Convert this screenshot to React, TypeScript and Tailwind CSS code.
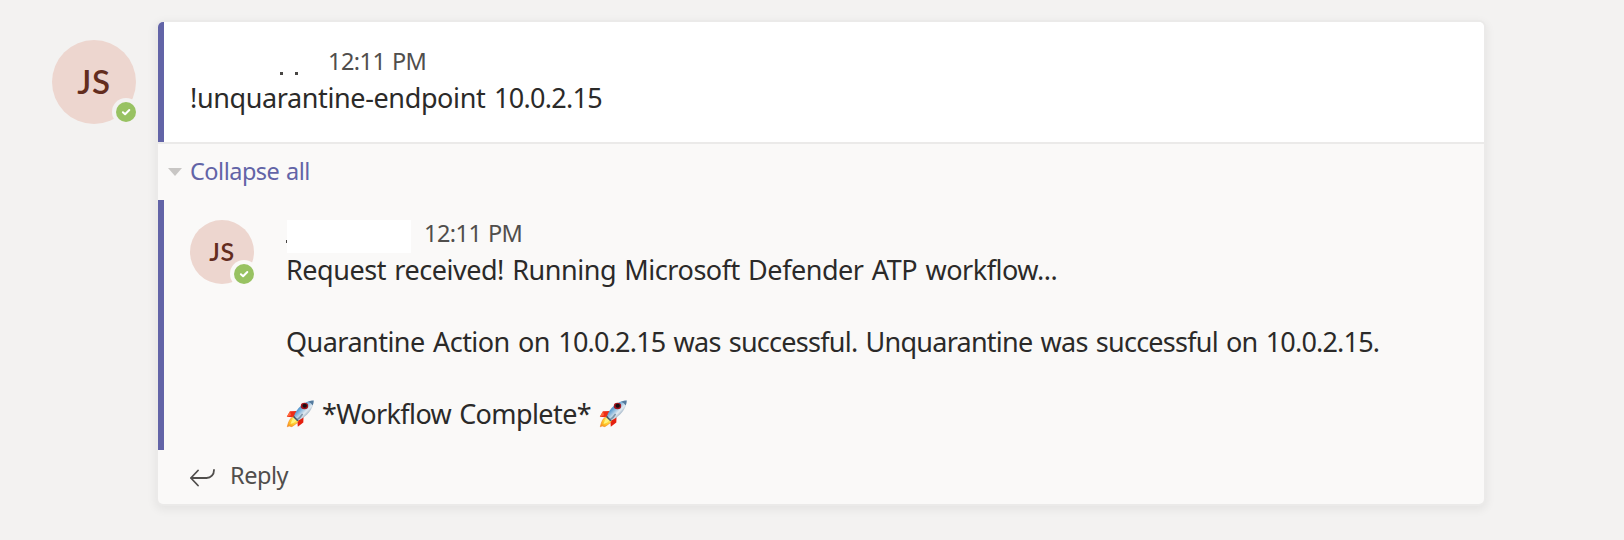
function Check() {
  return (
    <svg viewBox="0 0 20 20" className="h-5 w-5" fill="none">
      <circle cx="10" cy="10" r="10" fill="#98c262" />
      <path d="M6.9 10.2 9.1 12.3 13.3 8" stroke="#fff" strokeWidth="2" strokeLinecap="round" strokeLinejoin="round" />
    </svg>
  );
}

function Avatar({ large = false }: { large?: boolean }) {
  return (
    <div
      className={
        large
          ? "relative flex h-[84px] w-[84px] shrink-0 items-center justify-center rounded-full bg-[#edd6cf] pb-[2px] font-['Lato',sans-serif] text-[33px] leading-10 font-semibold tracking-[0.8px] text-[#632d1e]"
          : "relative flex h-16 w-16 shrink-0 items-center justify-center rounded-full bg-[#edd6cf] pb-[2px] font-['Lato',sans-serif] text-[25px] leading-8 font-semibold tracking-[0.5px] text-[#632d1e]"
      }
    >
      <span>JS</span>
      <span
        className={
          large
            ? "absolute -right-1 -bottom-[2px] rounded-full bg-[#f3f2f1] p-1"
            : "absolute -right-1 -bottom-1 rounded-full bg-[#faf9f8] p-1"
        }
      >
        <Check />
      </span>
    </div>
  );
}

function Rocket() {
  return (
    <svg viewBox="0 0 28 28" className="h-7 w-7 shrink-0">
      <defs>
        <linearGradient id="hull" x1="0" y1="0" x2="1" y2="1">
          <stop offset="0" stopColor="#245d94" />
          <stop offset="0.35" stopColor="#5f9fd2" />
          <stop offset="0.58" stopColor="#e3ebf1" />
          <stop offset="0.8" stopColor="#5d7c99" />
          <stop offset="1" stopColor="#3c5975" />
        </linearGradient>
        <linearGradient id="fire" x1="1" y1="0" x2="0" y2="1">
          <stop offset="0" stopColor="#fff27a" />
          <stop offset="0.6" stopColor="#ffc928" />
          <stop offset="1" stopColor="#f58a1f" />
        </linearGradient>
      </defs>
      <path d="M11 11 4 11.3.8 16.7 8.5 17.5Z" fill="#ee2d16" />
      <path d="M4 11.3.8 16.7 5 15.3Z" fill="#ff6a3b" />
      <path d="M17.5 17 17.3 22.5 11.8 26.8 11.3 20Z" fill="#e4200f" />
      <path d="M7.5 16.7C4 18 2.5 21.5 1.3 26.8 3 26 4 25.7 5 26.8 7 26.2 8 25.2 9 24.4 11 23.5 12.3 22 12.3 20Z" fill="url(#fire)" stroke="#f4831f" strokeWidth=".6" />
      <path d="M8 17.5C6 19 5.5 22 4.5 24 7.5 23 9.7 22.2 10.5 19.8Z" fill="#fff37e" />
      <path d="M8 16C10.5 8.5 17.5 1 27.7.5 27.8 8.5 20.5 17 12.2 20.5Z" fill="url(#hull)" />
      <path d="M22 1.8Q25 .5 27.7.5 27.7 3 26.7 5.6 25.3 2.8 22 1.8Z" fill="#557b9e" />
      <path d="M7.8 15.8 12.6 20.6 11.3 21.2 7.2 17.2Z" fill="#38506c" />
      <ellipse cx="18.5" cy="6" rx="3.7" ry="3.3" fill="#a0141c" />
      <ellipse cx="18.7" cy="5.8" rx="2.2" ry="2" fill="#180d14" />
      <path d="M10 19.5Q14 16.5 16 13.5L17.2 14.5Q15.2 18 11.5 20.5Z" fill="#55738f" opacity=".7" />
    </svg>
  );
}

export default function App() {
  return (
    <main className="flex h-[540px] w-[1624px] items-start overflow-hidden bg-[#f3f2f1] pt-[22px] pl-[52px] font-['Noto_Sans','Open_Sans',sans-serif] whitespace-nowrap text-[#2b2a29]">
      <div className="mt-[18px] mr-[22px]">
        <Avatar large />
      </div>
      <article className="h-[482px] w-[1326px] shrink-0 overflow-hidden rounded-[5px] bg-[#faf9f8] shadow-[0_0_0_2px_#ebeae9,0_3px_10px_3px_rgba(0,0,0,0.06)]">
        <header className="h-[122px] border-b-2 border-[#ebeae9] bg-white">
          <div className="h-[120px] border-l-[6px] border-[#6264a7] pt-[23px] pl-[26px]">
            <div className="flex h-[35px] items-start text-[23.5px] leading-8">
              <div className="flex w-[138px] gap-[12px] pt-[27px] pl-[90px]">
                <span className="h-[3px] w-[3px] bg-[#484644]" />
                <span className="h-[3px] w-[3px] bg-[#484644]" />
              </div>
              <time className="tracking-[-0.55px] text-[#504e4c] [word-spacing:1px]">12:11 PM</time>
            </div>
            <p className="text-[27px] leading-9 tracking-[-0.38px] [word-spacing:2px]">
              !unquarantine-endpoint <span className="tracking-[-0.7px]">10.0.2.15</span>
            </p>
          </div>
        </header>
        <button className="flex h-14 items-center pl-[10px] text-[23.5px] leading-8 tracking-[-0.5px] text-[#6264a7] [word-spacing:1px]">
          <svg viewBox="0 0 14 8" className="mr-2 h-2 w-[14px]"><path d="M0 0H14L7 8Z" fill="#c8c6c4" /></svg>
          <span className="-mt-[2px]">Collapse all</span>
        </button>
        <section className="flex h-[250px] border-l-[6px] border-[#6264a7] pt-5 pl-[26px]">
          <Avatar />
          <div className="ml-8">
            <div className="flex h-8 items-start">
              <span className="mt-5 h-[3px] w-px bg-[#484644]" />
              <span className="h-[33px] w-[124px] bg-white" />
              <time className="-mt-[3px] ml-[13px] text-[23.5px] leading-8 tracking-[-0.55px] text-[#504e4c] [word-spacing:1px]">12:11 PM</time>
            </div>
            <div className="text-[27px] leading-9">
              <p className="tracking-[-0.46px] [word-spacing:1.7px]">Request received! Running Microsoft Defender ATP workflow...</p>
              <p className="mt-9 tracking-[-0.74px] [word-spacing:1.8px]">
                <span className="tracking-[-0.53px]">Quarantine Action on </span>
                <span className="tracking-[-0.8px]">10.0.2.15</span> was successful. Unquarantine was successful on{" "}
                <span className="tracking-[-0.8px]">10.0.2.15.</span>
              </p>
              <p className="mt-9 flex items-center">
                <Rocket />
                <span className="mx-2 tracking-[-0.6px] [word-spacing:1.5px]">*Workflow Complete*</span>
                <Rocket />
              </p>
            </div>
          </div>
        </section>
        <button className="flex h-[54px] items-center pl-8 text-[23.5px] leading-8 tracking-[-0.45px] text-[#504e4c]">
          <svg viewBox="0 0 26 18" className="mr-[14px] h-[18px] w-[26px] translate-y-px" fill="none" stroke="currentColor" strokeWidth="1.8" strokeLinecap="round" strokeLinejoin="round">
            <path d="M8 1.5.9 9 8 16.5M.9 9H16.500C21 9 24 5.500 24 .9" />
          </svg>
          <span className="-mt-1">Reply</span>
        </button>
      </article>
    </main>
  );
}
